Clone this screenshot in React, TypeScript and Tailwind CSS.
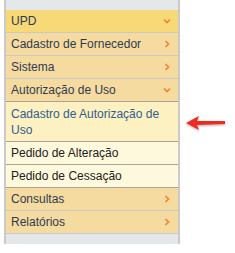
import React from 'react'

type Item = { label: string; kind: 'open' | 'closed' | 'sub' | 'active'; top?: boolean }

const ITEMS: Item[] = [
  { label: 'UPD', kind: 'open', top: true },
  { label: 'Cadastro de Fornecedor', kind: 'closed' },
  { label: 'Sistema', kind: 'closed' },
  { label: 'Autorização de Uso', kind: 'open' },
  { label: 'Cadastro de Autorização de Uso', kind: 'active' },
  { label: 'Pedido de Alteração', kind: 'sub' },
  { label: 'Pedido de Cessação', kind: 'sub' },
  { label: 'Consultas', kind: 'closed' },
  { label: 'Relatórios', kind: 'closed' },
]

function Chevron({ down }: { down: boolean }) {
  return (
    <svg width="8" height="8" viewBox="0 0 8 8" className="shrink-0">
      {down ? (
        <path d="M1 2.5 L4 5.5 L7 2.5" fill="none" stroke="#f0832a" strokeWidth="1.6" />
      ) : (
        <path d="M2.5 1 L5.5 4 L2.5 7" fill="none" stroke="#f0832a" strokeWidth="1.6" />
      )}
    </svg>
  )
}

export default function App() {
  return (
    <div className="w-[235px] h-[253px] bg-white relative" style={{ fontFamily: '"Liberation Sans", Arial, sans-serif' }}>
      <div className="ml-[4px] w-[176px] bg-[#e5e8eb] border-x-2 border-[#cacaca] pt-[10px] pb-[10px]">
        {ITEMS.map((it) => {
          const isSub = it.kind === 'sub' || it.kind === 'active'
          const bg = it.top
            ? 'bg-[#f7d978]'
            : it.kind === 'active'
              ? 'bg-[#fdf1c2]'
              : it.kind === 'sub'
                ? 'bg-[#fef8dc]'
                : 'bg-[#f6dba0]'
          const border = isSub || it.label === 'Autorização de Uso' ? 'border-[#a9a49a]' : 'border-[#c9c9c9]'
          const text = it.kind === 'active' ? 'text-[#2f5d8e]' : isSub ? 'text-[#222]' : 'text-[#2e3a52]'
          const pad = it.kind === 'active' ? 'pt-[4px] pb-[3px]' : 'py-[3px]'
          return (
            <div
              key={it.label}
              className={`flex items-start justify-between pl-[5px] pr-[7px] ${pad} border-b ${bg} ${border}`}
            >
              <span className={`text-[12px] leading-[16px] ${text}`}>{it.label}</span>
              {!isSub && (
                <span className="h-[16px] flex items-center">
                  <Chevron down={it.kind === 'open'} />
                </span>
              )}
            </div>
          )
        })}
      </div>
      {/* red arrow */}
      <svg className="absolute left-[184px] top-[114px]" width="44" height="20" viewBox="0 0 44 20">
        <defs>
          <filter id="sh" x="-20%" y="-30%" width="140%" height="160%">
            <feDropShadow dx="0" dy="1" stdDeviation="1" floodColor="#000" floodOpacity="0.35" />
          </filter>
        </defs>
        <path d="M2 9 L15 2 L13 7 L41 7 L41 10 L13 11 L15 16 Z" fill="#ee2a24" filter="url(#sh)" />
      </svg>
    </div>
  )
}
